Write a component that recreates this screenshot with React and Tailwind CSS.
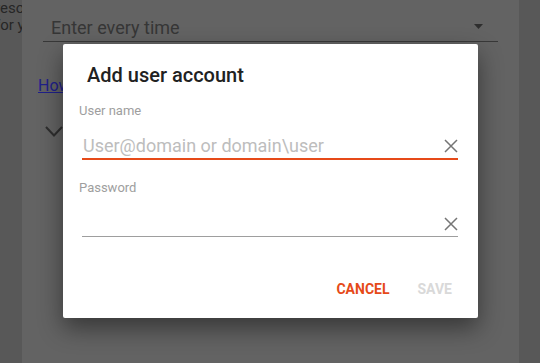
import React from 'react';

function ClearIcon() {
    return (
        <svg width="14" height="14" viewBox="0 0 14 14" className="shrink-0">
            <path d="M1 1 L13 13 M13 1 L1 13" stroke="#757575" strokeWidth="1.5" fill="none" />
        </svg>
    );
}

function Field({ label, placeholder, active, labelGap, rowGap }) {
    return (
        <div className={labelGap}>
            <div className="pl-[16px] text-[13px] leading-[16px] text-[#9e9e9e]">{label}</div>
            <div
                className={
                    'ml-[19px] mr-[20px] flex items-center h-[24px] box-content ' +
                    rowGap +
                    ' ' +
                    (active ? 'border-b-2 border-[#e64a19]' : 'border-b border-[#9e9e9e]')
                }
            >
                <div className="flex-1 pl-[1px] text-[18px] leading-[24px] text-[#bdbdbd] whitespace-nowrap">
                    {placeholder}
                </div>
                <ClearIcon />
            </div>
        </div>
    );
}

export default function App() {
    return (
        <div
            className="relative w-[540px] h-[363px] overflow-hidden bg-[#585858] flex"
            style={{ fontFamily: 'Roboto, "Liberation Sans", sans-serif' }}
        >
            {/* page behind the scrim */}
            <div className="w-[22px] shrink-0 overflow-hidden text-[15px] leading-[17px] text-[#262626]">
                <div className="ml-[-5px] whitespace-nowrap">resources</div>
                <div className="ml-[-5px] whitespace-nowrap">for your</div>
            </div>
            <div className="w-[497px] shrink-0 bg-[#636363]">
                <div className="ml-[21px] w-[455px] h-[41px] box-content border-b border-[#383838] flex items-start pt-0">
                    <div className="flex-1 pl-[8px] pt-[16px] text-[18px] leading-[24px] text-[#363636]">
                        Enter every time
                    </div>
                    <svg width="9" height="5" viewBox="0 0 9 5" className="mt-[24px] mr-[15px]">
                        <polygon points="0,0 9,0 4.5,5" fill="#2e2e2e" />
                    </svg>
                </div>
                <a className="block mt-[34px] ml-[16px] text-[16px] leading-[20px] text-[#20208a] underline">
                    How to sign in
                </a>
                <svg width="18" height="11" viewBox="0 0 18 11" className="block mt-[30px] ml-[23px]">
                    <polyline points="1,1 9,9.5 17,1" fill="none" stroke="#2e2e2e" strokeWidth="2" />
                </svg>
            </div>
            <div className="w-[21px] shrink-0 bg-[#585858]" />

            {/* dialog */}
            <div className="absolute left-[63px] top-[44px] w-[415px] h-[274px] bg-white rounded-[2px] shadow-[0_10px_24px_rgba(0,0,0,0.45)]">
                <div className="pt-[19px] pl-[24px] text-[20px] leading-[24px] font-medium text-[#212121]">
                    Add user account
                </div>
                <Field
                    label="User name"
                    placeholder="User@domain or domain\user"
                    active
                    labelGap="mt-[15.5px]"
                    rowGap="mt-[15.5px]"
                />
                <Field label="Password" placeholder="" labelGap="mt-[19.5px]" rowGap="mt-[16.5px]" />
                <div className="mt-[44px] flex justify-end gap-[28px] pr-[26px] text-[14px] leading-[16px] font-bold">
                    <span className="text-[#e64a19]">CANCEL</span>
                    <span className="text-[#d9d9d9]">SAVE</span>
                </div>
            </div>
        </div>
    );
}
